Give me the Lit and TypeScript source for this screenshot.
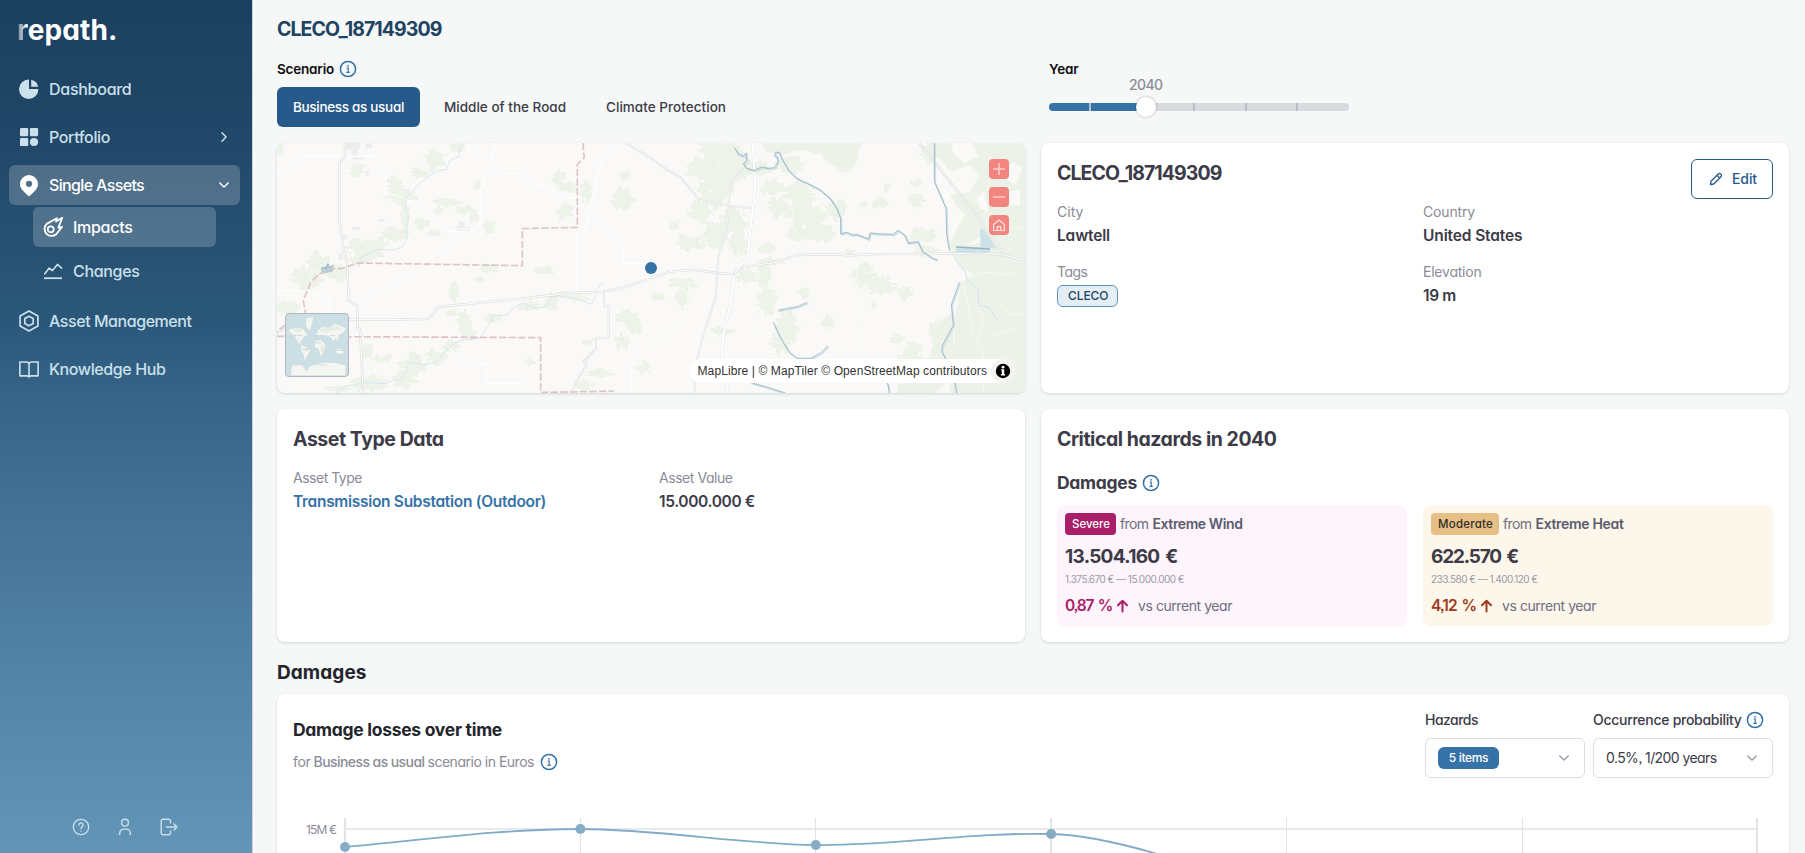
import { LitElement, html, css, svg } from "lit";
import { customElement, property, state } from "lit/decorators.js";
import { classMap } from "lit/directives/class-map.js";

/* Text whose tracking is adjusted so that it takes a given width. */
@customElement("fit-text")
class FitText extends LitElement {
  @property({ type: Number }) w = 0;
  static styles = css`
    :host { display: inline-block; white-space: nowrap; }
  `;
  render() {
    return html`<slot></slot>`;
  }
  firstUpdated() {
    const count = (this.textContent || "").length;
    const natural = this.getBoundingClientRect().width;
    if (this.w && count > 1) {
      const spacing = (this.w + 0.5 - natural) / count;
      this.style.letterSpacing = spacing.toFixed(3) + "px";
    }
  }
}

const t = (text: string, w: number) => html`<fit-text .w=${w}>${text}</fit-text>`;

const infoIcon = html`<svg width="18" height="18" viewBox="0 0 18 18" fill="none" stroke="#3572a8" stroke-width="1.5">
  <circle cx="9" cy="9" r="7.6"></circle>
  <path d="M7.6 8h1.6v4.2M7.4 12.3h3.4" stroke-width="1.2"></path>
  <circle cx="9" cy="5.8" r=".9" fill="#3572a8" stroke="none"></circle>
</svg>`;

const chevronDown = html`<svg width="12" height="12" viewBox="0 0 12 12" fill="none" stroke="currentColor" stroke-width="1.5" stroke-linecap="round" stroke-linejoin="round"><path d="M1.8 4 6 8l4.2-4"></path></svg>`;
const chevronRight = html`<svg width="12" height="12" viewBox="0 0 12 12" fill="none" stroke="currentColor" stroke-width="1.5" stroke-linecap="round" stroke-linejoin="round"><path d="m4 1.8 4 4.2-4 4.2"></path></svg>`;

const icons: Record<string, unknown> = {
  pie: svg`<path fill="currentColor" d="M10 .6v9.400h9.400A9.700 9.700 0 1 1 10 .6Z"/><path fill="currentColor" d="M12.200.8a9 9 0 0 1 7 7h-7Z"/>`,
  grid: svg`<g fill="currentColor"><rect x="1" y="1" width="8.2" height="8.2" rx="1.2"/><rect x="10.900" y="1" width="8.2" height="8.2" rx="1.2"/><rect x="1" y="10.900" width="8.2" height="8.2" rx="1.2"/><circle cx="15" cy="15" r="4.1"/></g>`,
  pin: svg`<path fill="currentColor" fill-rule="evenodd" d="M10 0a9 9 0 0 1 9 9c0 3.200-1.600 5.400-3.400 7.200L11.200 20.600a1.700 1.700 0 0 1-2.400 0L4.400 16.200C2.600 14.400 1 12.200 1 9a9 9 0 0 1 9-9Zm0 5.700a3.100 3.100 0 1 0 0 6.200 3.100 3.100 0 0 0 0-6.200Z"/>`,
  meteor: svg`<g fill="none" stroke="currentColor" stroke-width="1.8" stroke-linejoin="round"><path d="M19.200.8 13 4.600 13.800 1.200 3.700 6.900A7 7 0 1 0 13.400 17L19 10l-3.600.6Z"/><circle cx="7.700" cy="12.300" r="3"/></g>`,
  chart: svg`<path fill="none" stroke="currentColor" stroke-width="1.600" stroke-linejoin="round" stroke-linecap="round" d="M1.800 12.800 6.200 7l3.200 2.600 5-6.200 4.200 3.800"/><path stroke="currentColor" stroke-width="1.800" d="M1 17.200h18"/>`,
  hex: svg`<g fill="none" stroke="currentColor" stroke-width="1.700" stroke-linejoin="round"><path d="M10-.1 18.900 5v10L10 20.100 1.100 15V5Z"/><path d="M10 5.300 14.200 7.600v4.800L10 14.700 5.800 12.400V7.600Z"/></g>`,
  book: svg`<path fill="none" stroke="currentColor" stroke-width="1.600" stroke-linejoin="round" d="M.9 3h6.600A2.500 2.500 0 0 1 10 5.500V18A2.300 2.300 0 0 0 7.700 16.900H.9ZM19.100 3h-6.600A2.500 2.500 0 0 0 10 5.500V18a2.300 2.300 0 0 1 2.300-1.100h6.800Z"/>`,
};
const icon = (name: string) => html`<svg width="20" height="20" viewBox="0 0 20 20" overflow="visible">${icons[name]}</svg>`;

@customElement("app-sidebar")
class AppSidebar extends LitElement {
  static styles = css`
    :host {
      box-sizing: border-box; width: 253px; height: 100%; display: flex; flex-direction: column;
      background: linear-gradient(#1b3f5f 0%, #22496a 18%, #2b587a 38%, #38668a 48%, #5788aa 84%, #6295b7 100%);
      border-right: 1px solid #cdd3d9; color: #cbe0ea;
    }
    .logo { height: 37px; padding: 15px 0 0 17px; margin-bottom: 17px; color: #fff; font-size: 28px; line-height: 30px; font-weight: 700; }
    .dim { background: linear-gradient(90deg, #8698a9 20%, #fff 90%); -webkit-background-clip: text; background-clip: text; color: transparent; }
    nav { display: flex; flex-direction: column; gap: 8px; padding: 0 12px 0 9px; }
    .item { display: flex; align-items: center; gap: 10px; height: 40px; padding: 0 10px; border-radius: 6px; font-size: 16px; font-weight: 500; box-sizing: border-box; }
    .item fit-text { padding-bottom: 1px; }
    .item.active { background: rgba(255, 255, 255, .2); color: #fff; }
    .arrow { margin-left: auto; display: flex; }
    .sub { display: flex; flex-direction: column; gap: 4px; margin: -6px 24px 2px 24px; }
    .bottom { margin-top: auto; height: 52px; display: flex; align-items: center; justify-content: center; gap: 26px; padding-right: 2px; }
  `;
  render() {
    return html`
      <div class="logo"><fit-text .w=${100}><span class="dim">r</span>epath.</fit-text></div>
      <nav>
        <div class="item">${icon("pie")}${t("Dashboard", 82)}</div>
        <div class="item">${icon("grid")}${t("Portfolio", 60.500)}<span class="arrow">${chevronRight}</span></div>
        <div class="item active">${icon("pin")}${t("Single Assets", 94.500)}<span class="arrow">${chevronDown}</span></div>
        <div class="sub">
          <div class="item active">${icon("meteor")}${t("Impacts", 59)}</div>
          <div class="item">${icon("chart")}${t("Changes", 66)}</div>
        </div>
        <div class="item">${icon("hex")}${t("Asset Management", 142)}</div>
        <div class="item">${icon("book")}${t("Knowledge Hub", 116)}</div>
      </nav>
      <div class="bottom">
        <svg width="18" height="18" viewBox="0 0 18 18" fill="none" stroke="currentColor" stroke-width="1.300" stroke-linecap="round"><circle cx="9" cy="9" r="7.700"></circle><path d="M6.900 7.200A2.100 2.100 0 1 1 10 8.900c-.7.4-1 .8-1 1.500v.2M9 12.900v.2"></path></svg>
        <svg width="18" height="18" viewBox="0 0 18 18" fill="none" stroke="currentColor" stroke-width="1.400" stroke-linecap="round"><circle cx="9" cy="4.700" r="3.400"></circle><path d="M3.700 16.500v-1.400a4 4 0 0 1 4-4h2.600a4 4 0 0 1 4 4v1.400"></path></svg>
        <svg width="18" height="18" viewBox="0 0 18 18" fill="none" stroke="currentColor" stroke-width="1.400" stroke-linecap="round" stroke-linejoin="round"><path d="M10.500 5V3a1.800 1.800 0 0 0-1.800-1.800H3A1.800 1.800 0 0 0 1.200 3v12A1.800 1.800 0 0 0 3 16.800h5.700a1.800 1.800 0 0 0 1.800-1.800v-2M6.500 9h10.400M14 6l3 3-3 3"></path></svg>
      </div>`;
  }
}

/* Irregular woodland patches: centre x, centre y, half width, half height. */
const blob = (cx: number, cy: number, rx: number, ry: number) => {
  let seed = (cx * 7919 + cy * 104729) % 2147483647;
  const rnd = () => (seed = (seed * 16807) % 2147483647) / 2147483647;
  const n = Math.max(16, Math.round((rx + ry) / 2.4));
  let d = "";
  for (let i = 0; i < n; i++) {
    const a = (i / n) * Math.PI * 2;
    const r = 0.55 + rnd() * 0.6;
    const x = Math.round((cx + Math.cos(a) * rx * r) / 3) * 3;
    const y = Math.round((cy + Math.sin(a) * ry * r) / 3) * 3;
    d += i ? `H${x}V${y}` : `M${x} ${y}`;
    if (rnd() > 0.6) d += `l${Math.round(rnd() * 12 - 6)} ${Math.round(rnd() * 8 - 4)}`;
  }
  return d + "Z";
};
const woodsWest = [
  [30, 45, 14, 22], [260, 105, 26, 26], [375, 150, 24, 34], [495, 75, 38, 34], [560, 38, 28, 16], [450, 115, 34, 18], [395, 185, 50, 24],
  [405, 245, 16, 52], [375, 300, 48, 26], [290, 340, 64, 36], [270, 372, 40, 16], [455, 265, 26, 22], [490, 295, 24, 12], [530, 202, 46, 16], [505, 228, 14, 18], [585, 225, 34, 16], [612, 248, 18, 16],
  [660, 272, 22, 22], [622, 150, 12, 22], [885, 228, 28, 26], [865, 128, 24, 26], [895, 156, 34, 16], [950, 170, 22, 34], [1060, 190, 36, 40], [1064, 122, 16, 18],
  [655, 400, 40, 16], [630, 432, 16, 14], [825, 407, 32, 12], [145, 385, 36, 38], [110, 430, 50, 38], [200, 415, 50, 26], [55, 520, 36, 26], [550, 470, 20, 36], [585, 560, 28, 34], [545, 535, 24, 14], [600, 595, 26, 22],
  [545, 630, 34, 20], [500, 665, 38, 26], [430, 690, 46, 36], [400, 735, 44, 32], [300, 745, 60, 28], [290, 650, 22, 26], [335, 672, 32, 16], [200, 760, 40, 12], [675, 550, 34, 14], [780, 512, 38, 18], [845, 505, 24, 28], [955, 622, 18, 12], [780, 682, 20, 12],
  [1075, 550, 40, 26], [1095, 578, 22, 24], [1060, 620, 26, 30], [990, 715, 44, 14], [940, 750, 34, 20], [1120, 700, 26, 20], [925, 490, 40, 12], [870, 480, 30, 10],
];
const woodsMid = [
  [190, 45, 50, 44], [240, 50, 44, 34], [160, 100, 50, 40], [215, 120, 54, 60], [260, 90, 46, 50], [190, 175, 46, 50], [150, 230, 34, 40], [75, 268, 18, 18], [120, 320, 50, 28], [190, 300, 46, 44], [250, 260, 42, 46], [265, 330, 36, 36],
  [330, 100, 36, 30], [365, 160, 40, 28], [390, 215, 40, 34], [450, 175, 54, 36], [420, 90, 50, 30], [470, 240, 66, 44], [510, 290, 50, 36], [560, 225, 36, 32], [440, 300, 40, 24], [350, 340, 34, 18], [290, 420, 36, 26], [345, 420, 28, 44],
  [350, 500, 34, 44], [410, 580, 40, 60], [390, 620, 32, 40], [460, 472, 22, 18], [536, 562, 22, 26], [100, 445, 50, 20], [95, 490, 24, 30], [220, 590, 38, 18], [640, 430, 40, 28], [690, 450, 56, 28], [765, 475, 26, 24], [645, 400, 26, 20],
  [820, 300, 44, 28], [830, 345, 50, 18], [840, 60, 34, 28], [710, 157, 14, 14], [800, 142, 20, 14], [690, 205, 30, 16], [640, 208, 12, 16], [800, 195, 28, 24], [670, 510, 10, 16], [740, 615, 26, 14], [790, 640, 26, 30], [790, 700, 60, 50], [870, 700, 30, 60], [860, 590, 28, 40], [600, 350, 20, 10], [20, 485, 24, 14], [360, 380, 40, 14], [880, 640, 30, 40],
];

@customElement("asset-map")
class AssetMap extends LitElement {
  static styles = css`
    :host { display: block; position: relative; overflow: hidden; height: 250px; border-radius: 8px; background: #faf9f7; box-shadow: 0 1px 3px rgba(30, 50, 60, .18); }
    .canvas { display: block; }
    .tools { position: absolute; top: 16px; right: 16px; display: flex; flex-direction: column; gap: 8px; }
    .tool { width: 20px; height: 20px; border-radius: 4px; background: #f3857f; display: block; }
    .overview { position: absolute; left: 8px; bottom: 16px; box-sizing: border-box; width: 64px; height: 64px; border: 1px solid #b4b6c2; border-radius: 4px; overflow: hidden; background: #cbdfe4; }
    .credit { position: absolute; right: 10px; bottom: 10px; height: 24px; display: flex; align-items: center; border-radius: 12px; background: #fff; padding-left: 9px; color: #333; font: 12px "Liberation Sans", sans-serif; gap: 4px; }
    .credit svg { display: block; background: #f3f4f1; border-radius: 50%; }
    .dot { position: absolute; left: 368px; top: 119px; width: 12px; height: 12px; border-radius: 50%; background: #3572a8; }
  `;
  render() {
    const double = (d: string, w = 5) => svg`<path d=${d} stroke="#dcdedd" stroke-width=${w + 1}/><path d=${d} stroke="#fff" stroke-width=${w / 2}/>`;
    const water = (d: string, w = 5) => svg`<path d=${d} stroke="#cde2e7" stroke-width=${w} transform="translate(3 3.500)"/><path d=${d} stroke="#98b3c3" stroke-width=${w / 1.8}/>`;
    return html`
      <svg class="canvas" width="748" height="250" viewBox="0 0 748 250" fill="none" stroke-linejoin="round">
        <g transform="translate(-7 -8) scale(.33333)">
          <path fill="#edf3e9" d=${woodsWest.map((b) => blob(b[0], b[1], b[2], b[3])).join("")}></path>
          <path fill="#eceded" d="M228 24h42v20h-6v18h-20V44h-16ZM284 26h22v14h-18ZM248 66h32v8h-32ZM286 108h10v14h-8ZM218 298h14v14h-14ZM206 354h12v20h-12ZM322 252h22v8h-22ZM246 276h24v8h-24ZM552 276h50v14h-40ZM566 258h18v18h-18Z"></path>
          <g stroke="#fff" stroke-width="3">
            <path d="M20 118 50 108 96 64H318V100L346 114V172L400 188 440 214 486 236 500 276 520 290H610L630 268 632 160 660 90 676 24M578 34 660 70M660 90l40 24h70l6 30 50 12h24v24l40 8 60 2M238 530l40-24L500 356l90-74M548 282h62M920 290v180M945 290l50-220 80-40M930 210l60 40 70 90v45h80M20 468h100l60 22v50M540 640l60 56 50-12v62h110M1110 640l-25 50v80M60 775l30-60"></path>
          </g>
          <g stroke="#cfe6ee" stroke-width="2.500">
            <path d="m584 24-14 16-4 26-20 6-8 6-8 26-28 2-24 18-30 22-22 26-20 20 2 34 8 16-6 40 2 28-16 26-30 10-40-4-32 16-24 10-2 28"></path>
            <path d="m196 776 30-22 60-12 60 4 30-12 20-2 18-40 10-12 36 10 40-10 40-44 30-20 60-6 22-36 20-32 40-2 24-26 24-10 38 16 26-4 20-30 20-4 60 10 40 16 16-30M984 460l14-18"></path>
          </g>
          <path fill="#b5d0dc" d="M154 396l10 4 8-14 4 10 16-6-4 20-34 6Z"></path><path stroke="#94b5c8" stroke-width="3" d="m154 402 10-6 4 6 6-16 4 12 12-6"></path>
          ${double("M225 20V66L208 84V250L220 340 232 390 236 496 262 514V580L270 582 280 776", 6)}
          ${double("M236 554H350L472 552 488 540 498 520 520 514 700 496 910 474 1000 470 1060 458 1140 432", 6)}
          ${double("M1002 470V512H1016V608H978V640L942 678 950 690 918 742 902 776", 5)}
          ${double("M16 600 44 580M1066 24l74 44", 5)}
          <g stroke="#e0c3c6" stroke-width="5" stroke-dasharray="22 7">
            <path d="M940 24v24l3 20-21 20V277L757 281V392L264 384 218 400 180 402 146 418 122 442 100 496 106 534M46 570 20 590"></path>
            <path d="M20 604 812 608V772L900 771 1032 768"></path>
          </g>
        </g>
        <g transform="translate(373 -8) scale(.33333)">
          <path fill="#edf3e9" d=${woodsMid.map((b) => blob(b[0], b[1], b[2], b[3])).join("")}></path>
          <path fill="#ecf2e7" d="M335 24H640L630 40 620 80 600 108 575 112 555 96 530 86 515 56 490 58 470 44 440 48 400 60 370 54 345 50ZM830 24H1130V780H900L895 700 915 620 912 560 920 520 935 440 970 420 930 396 900 330 915 290 945 240 920 215 900 180 960 170 990 120 960 90 900 110 870 70 830 60ZM870 560l40-30v200l-60 46h-110l10-50 80-30Z"></path>
          <path fill="#fbfaf8" d="M980 190l24-20 10 60-24-10ZM1060 180l50-20v50h-40ZM905 24h60l20 40-40 20-36-30ZM1050 120l40-40 26 20-20 50ZM950 330l50-30v20ZM860 120l30 30 10 60-20-10Z"></path>
          <g stroke="#f8faf6" stroke-width="2.500">
            <path d="M0 400h60l60 40-20 130-70 40-30 30M430 50l60 10 100 50 16 60-16 80M640 30l-20 70-30 40M615 360l18 200-10 100M200 460h60l60 8v110l60 20 20 30M530 628l100 44M160 610h60M1020 60v100l-60 30M1010 200v80h120M960 430l40-20 60 10 50-14M1050 500l30 40 60-4M1030 600l60-20M980 500l20 60-20 60M940 440l30 160 30 50v120"></path>
          </g>
          ${double("M308 24 316 160 304 260 292 370 256 410 236 530 220 600 214 680 236 776", 7)}
          <path d="M308 24 316 160 304 260 292 370 256 410 236 530 220 600 214 680 236 776" stroke="#fff" stroke-width="6"></path>
          ${double("M300 76 250 130 236 170V220L228 300 206 360 196 490 160 600 134 700V776")}
          ${double("M0 68 50 104 90 126 150 196 240 212 304 220")}
          ${double("M0 430 60 410 130 404 200 414 250 418 282 394 370 384 440 360 560 358 600 362 640 358 870 356 1000 354 1060 360 1126 376", 6)}
          ${double("M808 24 900 140 980 240 1062 358", 6)}
          ${water("m254 38 10 18 16 8 8-10 2 22-10 10 10 14 24 6 20-10 20 4 20-2 10-18-2-14-8-4 2-10 12 0 8 20 20 34 24 24 30 14 40 20 30 26 20 30 12 30v46l20-4 14 8 14-2 36 14 4-18 20 2 50 2 14-12 20 14 10 24 30-4 14 30 30 20 14 4")}
          ${water("M853 24V140L888 220 890 300 898 346", 4.5)}
          ${water("M928 442 904 510 910 570 876 634V650L910 720 920 776", 4.5)}
          ${water("m370 562 20 44 28 46 24 18h40l30-16 22-22M384 526l60-12 28-12M300 742l50 14 56 18M700 720l14 30 4 26", 4.5)}
          <path fill="#cde2e7" d="M990 280l12 4 38 56h-48ZM918 334l102 4v16H918Z"></path>
          <path stroke="#98b3c3" stroke-width="4" d="M918 336l102 6"></path>
          <path stroke="#dce9ec" stroke-width="4" d="m905 350 10 20 30 40 10 30 30 22v50l30 4 32 46"></path>
        </g>
      </svg>
      <span class="dot"></span>
      <div class="tools">
        <svg class="tool" viewBox="0 0 20 20" stroke="#fccfca" stroke-width="1.500"><path d="M10 4v12M4 10h12"></path></svg>
        <svg class="tool" viewBox="0 0 20 20" stroke="#fccfca" stroke-width="1.500"><path d="M4 10h12"></path></svg>
        <svg class="tool" viewBox="0 0 20 20" fill="none" stroke="#fde3e0" stroke-width="1.200" stroke-linejoin="round"><path d="M4.600 15.500V9.500L10 5l5.400 4.500v6ZM8.200 15.300v-3.600h3.600v3.600"></path></svg>
      </div>
      <div class="overview">
        <svg width="62" height="62" viewBox="0 0 190 190" fill="#f4f5f1">
          <path d="M62 12 84 10 80 26 72 52 62 38ZM10 48 30 42 52 46 60 56 66 64 54 70 46 84 40 82 48 96 38 88 26 66 12 56ZM48 96l14 6 12 8-6 14-10 18-4-18-8-14ZM92 64l6-14 14-10 20 2 20-12 32 14-10 14-12 6-2 18-8-8-8 8-10-14-18-4-14 4ZM88 84l20-4 10 12 2 10-8 20-6 8-6-22-12-8ZM148 114l14-8 14 6-2 10-18-2ZM16 188 18 158 50 156 62 176 74 160 110 150 150 150 182 158V188Z"></path>
          <path fill="#e6ecdf" d="M12 46l24-2 18 8-18 5ZM100 48l58-12 14 10-60 10ZM106 98l10 0v16l-8 6ZM56 104h10l2 10-8 4Z"></path>
          <path stroke="#c3c9c8" stroke-width="2.500" stroke-dasharray="5 2" d="M26 66h24M90 66h20M136 66h16M88 88h20M52 108h22M148 112h28M96 156h28"></path>
          <path stroke="#dbe7e4" stroke-width="4" d="M96 24l12 4M140 30l8-3"></path>
        </svg>
      </div>
      <div class="credit">
        ${t("MapLibre | © MapTiler © OpenStreetMap contributors", 289)}
        <svg width="24" height="24" viewBox="0 0 24 24"><circle cx="12" cy="12" r="7.200"></circle><path fill="#fff" d="M10.200 10.300h3v4.800h.9v1.300h-4.200v-1.300h.9v-3.500h-.6Z"></path><circle cx="12" cy="8.200" r="1.400" fill="#fff"></circle></svg>
      </div>`;
  }
}

interface Hazard { tone: string; level: string; badge: number; name: string; nameW: number; amount: string; amountW: number; range: string; rangeW: number; change: string; changeW: number; }
const hazards: Hazard[] = [
  { tone: "severe", level: "Severe", badge: 37.500, name: "Extreme Wind", nameW: 89.500, amount: "13.504.160 €", amountW: 112, range: "1.375.670 € — 15.000.000 €", rangeW: 118.500, change: "0,87 %", changeW: 46.500 },
  { tone: "moderate", level: "Moderate", badge: 54.500, name: "Extreme Heat", nameW: 87.500, amount: "622.570 €", amountW: 86.500, range: "233.580 € — 1.400.120 €", rangeW: 106, change: "4,12 %", changeW: 44.500 },
];
const scenarios: [string, number][] = [["Business as usual", 110.500], ["Middle of the Road", 121.500], ["Climate Protection", 119.500]];

@customElement("app-root")
class AppRoot extends LitElement {
  @state() scenario = 0;
  static styles = css`
    :host { display: flex; width: 100vw; height: 100vh; overflow: hidden; background: #f6f8f7; color: #3c3b47;
      font-family: Inter, "Noto Sans", sans-serif; font-feature-settings: "cv11", "ss03"; font-size: 14px; line-height: 20px; }
    main { flex: 1; min-width: 0; padding: 0 16px 0 24px; }
    fit-text { vertical-align: top; }
    .page-title { margin: 0; padding-top: 17px; font-size: 19.500px; line-height: 24px; font-weight: 700; color: #1d4463; }
    .filters { display: flex; margin-top: 18px; height: 84px; }
    .filter { flex: none; width: 772px; }
    .label { display: flex; align-items: center; gap: 5px; height: 20px; color: #0c0c0e; font-weight: 600; font-size: 13.500px; }
    .label svg, .with-icon svg { flex: none; }
    .tabs { display: flex; gap: 8px; margin-top: 8px; }
    .tab { height: 40px; padding: 0 16px; display: flex; align-items: center; border-radius: 6px; font-weight: 500; font-size: 13.500px; }
    .tab.on { background: #275a8b; color: #fff; }
    .slider { width: 300px; position: relative; }
    .year { display: block; margin-top: -4px; padding-left: 80px; color: #8a8b98; font-weight: 500; }
    .track { height: 8px; margin-top: 8px; border-radius: 4px; overflow: hidden; background: #d9dadf; }
    .fill { height: 8px; width: 97px; background: #3572a8; }
    .tick { position: absolute; bottom: 0; width: 2px; height: 8px; background: #bbbcc6; }
    .thumb { position: absolute; left: 87px; bottom: -6px; width: 20px; height: 20px; border-radius: 50%; background: #fff; box-shadow: 0 0 2px 1px rgba(0, 0, 0, .12); }
    .cards { display: grid; grid-template-columns: 1fr 1fr; grid-template-rows: 250px 233px; gap: 16px; }
    .card { box-sizing: border-box; background: #fff; border-radius: 8px; padding: 16px; box-shadow: 0 1px 3px rgba(30, 50, 60, .16); }
    .card-head { display: flex; justify-content: space-between; height: 41px; }
    h2 { margin: 0; font-size: 19.500px; line-height: 28px; font-weight: 700; }
    .edit { box-sizing: border-box; width: 82px; height: 40px; border: 1px solid #275a8b; border-radius: 6px; display: flex; align-items: center; padding-left: 17px; gap: 9px; color: #275a8b; font-weight: 500; }
    .fields { display: grid; grid-template-columns: 1fr 1fr; column-gap: 16px; row-gap: 12px; }
    .field { height: 48px; }
    .key { color: #8a8b98; line-height: 24px; font-size: 14px; }
    .value { font-size: 15.500px; line-height: 24px; font-weight: 600; }
    .link { color: #3572a8; }
    .tag { box-sizing: border-box; display: flex; align-items: center; width: 61px; height: 22px; margin-top: 1px; padding-left: 10px; border: 1px solid #5e96bc; border-radius: 6px; background: #e4eef4; color: #1d4463; font-size: 12px; line-height: 20px; font-weight: 500; }
    .asset .fields { margin-top: 13px; }
    .with-icon { display: flex; align-items: center; gap: 5px; }
    h3 { margin: 0; font-size: 17.500px; line-height: 24px; font-weight: 700; }
    .critical h3 { margin-top: 18px; }
    .hazards { display: grid; grid-template-columns: 1fr 1fr; gap: 16px; margin-top: 10px; }
    .hazard { height: 121px; box-sizing: border-box; padding: 8px; border-radius: 8px; }
    .severe { background: #fdf4fc; --accent: #a81e68; --badge: #a81e68; --ink: #fff; }
    .moderate { background: #fdf6ea; --accent: #9c3d20; --badge: #e5bf85; --ink: #332d28; }
    .line { display: flex; align-items: center; gap: 4px; height: 22px; color: #6e6f80; }
    .line strong { font-weight: 600; color: #5a5b6c; }
    .badge { height: 22px; padding: 0 6px 0 7px; display: flex; align-items: center; border-radius: 4px; background: var(--badge); color: var(--ink); font-size: 11.500px; font-weight: 500; }
    .amount { margin-top: 8px; font-size: 19px; line-height: 28px; font-weight: 700; word-spacing: 2px; }
    .range { font-size: 10px; line-height: 16px; color: #9a9ba6; }
    .change { display: flex; align-items: center; margin-top: 7px; height: 24px; color: #6e6f80; }
    .change b { font-size: 15.500px; font-weight: 600; color: var(--accent); word-spacing: 2px; }
    .change svg { stroke: var(--accent); margin: 0 9px 0 4px; }
    .section { margin: 19px 0 9px; color: #24252c; line-height: 24px; font-size: 19px; }
    .losses { height: 400px; padding: 0; color: #24252c; }
    .losses-head { display: flex; justify-content: space-between; padding: 16px 16px 0; height: 114px; box-sizing: border-box; }
    .losses-head h3 { padding-top: 8px; }
    .subtitle { margin-top: 10px; display: flex; align-items: center; gap: 3px; color: #8a8b98; line-height: 20px; }
    .subtitle strong { font-weight: 500; }
    .subtitle svg { margin-left: 3px; }
    .selects { display: flex; gap: 8px; color: #3c3b47; }
    .select-label { height: 20px; display: flex; align-items: center; gap: 5px; font-weight: 500; }
    .select { box-sizing: border-box; width: 160px; height: 40px; margin-top: 8px; padding: 0 14px 0 12px; border: 1px solid #dcdde1; border-radius: 6px; display: flex; align-items: center; justify-content: space-between; background: #fff; }
    .select.wide { width: 180px; }
    .select svg { color: #9c9da8; }
    .chip { width: 61px; height: 22px; border-radius: 6px; background: #3572a8; color: #fff; display: flex; align-items: center; justify-content: center; font-size: 12px; font-weight: 500; }
    .plot { display: block; }
    .axis { font-size: 12px; fill: #8a8b98; }
  `;

  field(key: string, kw: number, value: unknown) {
    return html`<div class="field"><div class="key">${t(key, kw)}</div><div class="value">${value}</div></div>`;
  }

  hazard(h: Hazard) {
    return html`<div class=${classMap({ hazard: true, [h.tone]: true })}>
      <div class="line"><span class="badge">${t(h.level, h.badge)}</span><span>${t("from", 28)}</span><strong>${t(h.name, h.nameW)}</strong></div>
      <div class="amount">${t(h.amount, h.amountW)}</div>
      <div class="range">${t(h.range, h.rangeW)}</div>
      <div class="change"><b>${t(h.change, h.changeW)}</b>
        <svg width="13" height="14" viewBox="0 0 13 14" fill="none" stroke-width="2" stroke-linecap="round" stroke-linejoin="round"><path d="M6.500 12.500V2M2 6.200 6.500 1.700 11 6.200"></path></svg>
        ${t("vs current year", 93.500)}</div>
    </div>`;
  }

  render() {
    const xs = [0, 1, 2, 3, 4, 5, 6].map((i) => 68 + i * 235.4);
    const points = [39, 21, 37, 26];
    return html`
      <app-sidebar></app-sidebar>
      <main>
        <h1 class="page-title">${t("CLECO_187149309", 164)}</h1>
        <div class="filters">
          <div class="filter">
            <div class="label">${t("Scenario", 56.500)}${infoIcon}</div>
            <div class="tabs">${scenarios.map(([name, w], i) => html`<div class=${classMap({ tab: true, on: i === this.scenario })} @click=${() => (this.scenario = i)}>${t(name, w)}</div>`)}</div>
          </div>
          <div>
            <div class="label">${t("Year", 29)}</div>
            <div class="slider">
              <span class="year">${t("2040", 33)}</span>
              <div class="track"><div class="fill"></div></div>
              ${[40, 144, 196, 247].map((x) => html`<span class="tick" style="left:${x}px"></span>`)}
              <span class="thumb"></span>
            </div>
          </div>
        </div>
        <div class="cards">
          <asset-map></asset-map>
          <section class="card place">
            <div class="card-head">
              <h2>${t("CLECO_187149309", 164)}</h2>
              <div class="edit"><svg width="14" height="14" viewBox="0 0 14 14" fill="none" stroke="currentColor" stroke-width="1.300" stroke-linejoin="round"><path d="m1.500 12.500.5-3.200L9.300 2a1.600 1.600 0 0 1 2.300 0l.4.4a1.600 1.600 0 0 1 0 2.300L4.700 12ZM8 3.400 10.600 6"></path></svg>${t("Edit", 24.500)}</div>
            </div>
            <div class="fields">
              ${this.field("City", 26, t("Lawtell", 52.500))}
              ${this.field("Country", 51.500, t("United States", 99))}
              ${this.field("Tags", 30, html`<span class="tag">${t("CLECO", 40)}</span>`)}
              ${this.field("Elevation", 58, t("19 m", 32.500))}
            </div>
          </section>
          <section class="card asset">
            <h2>${t("Asset Type Data", 150)}</h2>
            <div class="fields">
              ${this.field("Asset Type", 68.500, html`<span class="link">${t("Transmission Substation (Outdoor)", 252.500)}</span>`)}
              ${this.field("Asset Value", 73, t("15.000.000 €", 95.500))}
            </div>
          </section>
          <section class="card critical">
            <h2>${t("Critical hazards in 2040", 219)}</h2>
            <h3 class="with-icon">${t("Damages", 79.500)}${infoIcon}</h3>
            <div class="hazards">${hazards.map((h) => this.hazard(h))}</div>
          </section>
        </div>
        <h2 class="section">${t("Damages", 89)}</h2>
        <section class="card losses">
          <div class="losses-head">
            <div>
              <h3>${t("Damage losses over time", 208.500)}</h3>
              <div class="subtitle">${t("for", 17)}<strong>${t("Business as usual", 110.500)}</strong>${t("scenario in Euros", 106)}${infoIcon}</div>
            </div>
            <div class="selects">
              <div><div class="select-label">${t("Hazards", 52.500)}</div><div class="select"><span class="chip">${t("5 items", 39)}</span>${chevronDown}</div></div>
              <div><div class="select-label">${t("Occurrence probability", 148)}${infoIcon}</div><div class="select wide">${t("0.5%, 1/200 years", 110)}${chevronDown}</div></div>
            </div>
          </div>
          <svg class="plot" width="1512" height="60" viewBox="0 0 1512 60">
            <path d="M67 21H1481" stroke="#e8e9ea" stroke-width="2"></path>
            ${xs.map((x, i) => svg`<path d="M${i % 3 ? Math.floor(x) + 0.5 : Math.round(x)} 10V60" stroke="#e2e3e5" stroke-width=${i % 3 ? 1 : 2}/>`)}
            <text class="axis" x="29" y="25.500" textLength="31">15M €</text>
            <path fill="none" stroke="#82abc6" stroke-width="1.800" d="M68 39C146 32 224 21 303 21S460 36 538.500 37 695 24 774 26C806 26.500 842 35 879 45.500L930 60"></path>
            ${points.map((y, i) => svg`<circle cx=${xs[i]} cy=${y} r="5" fill="#86acc5"/>`)}
          </svg>
        </section>
      </main>`;
  }
}
